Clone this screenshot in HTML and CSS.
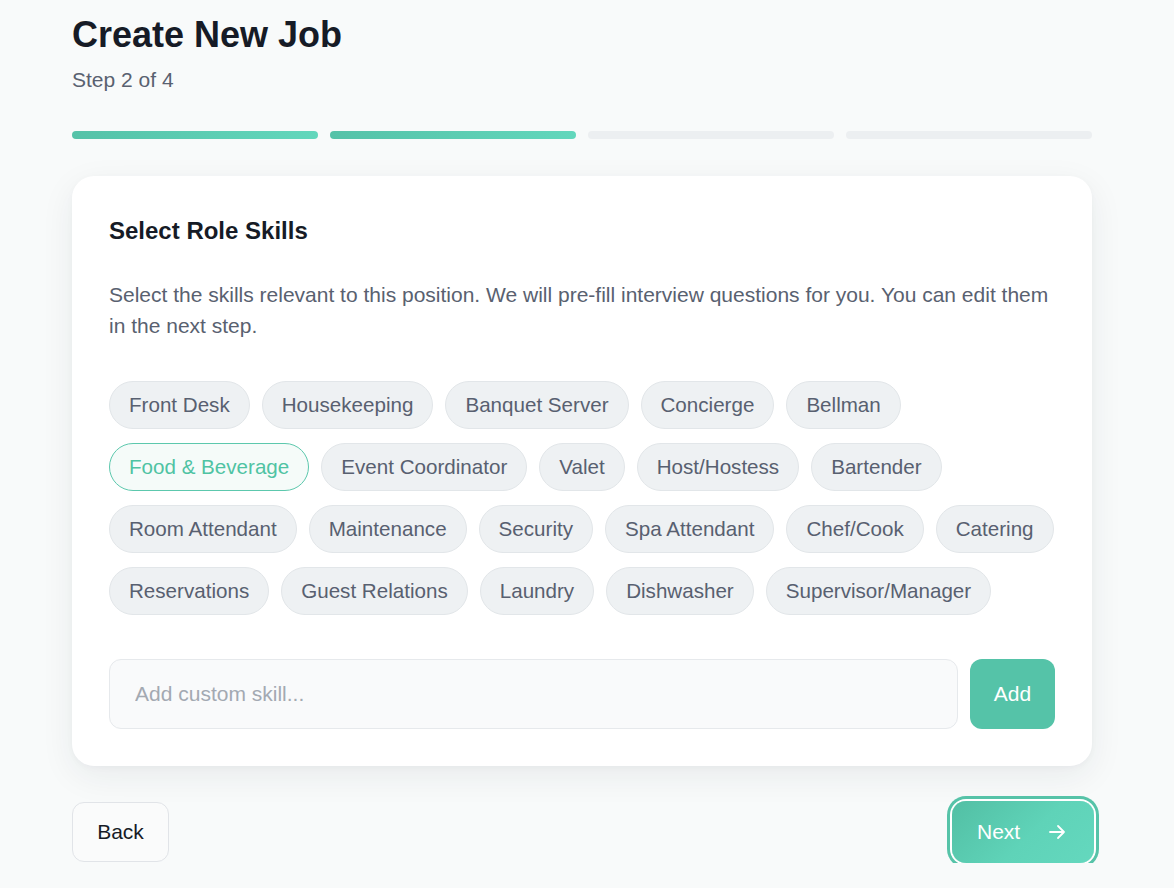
FILE: index.html
```html
<!DOCTYPE html>
<html lang="en">
<head>
<meta charset="utf-8">
<title>Create New Job</title>
<link rel="stylesheet" href="styles.css">
</head>
<body>
<main class="page">
  <header class="header">
    <h1 class="title">Create New Job</h1>
    <p class="step">Step 2 of 4</p>
  </header>
  <div class="progress">
    <span class="seg done"></span>
    <span class="seg done"></span>
    <span class="seg"></span>
    <span class="seg"></span>
  </div>
  <section class="card">
    <h2 class="card-title">Select Role Skills</h2>
    <p class="card-desc">Select the skills relevant to this position. We will pre-fill interview questions for you. You can edit them in the next step.</p>
    <div class="chips">
      <div class="chip-row">
        <button class="chip">Front Desk</button>
        <button class="chip">Housekeeping</button>
        <button class="chip">Banquet Server</button>
        <button class="chip">Concierge</button>
        <button class="chip">Bellman</button>
      </div>
      <div class="chip-row">
        <button class="chip selected">Food &amp; Beverage</button>
        <button class="chip">Event Coordinator</button>
        <button class="chip">Valet</button>
        <button class="chip">Host/Hostess</button>
        <button class="chip">Bartender</button>
      </div>
      <div class="chip-row">
        <button class="chip">Room Attendant</button>
        <button class="chip">Maintenance</button>
        <button class="chip">Security</button>
        <button class="chip">Spa Attendant</button>
        <button class="chip">Chef/Cook</button>
        <button class="chip">Catering</button>
      </div>
      <div class="chip-row">
        <button class="chip">Reservations</button>
        <button class="chip">Guest Relations</button>
        <button class="chip">Laundry</button>
        <button class="chip">Dishwasher</button>
        <button class="chip">Supervisor/Manager</button>
      </div>
    </div>
    <div class="custom">
      <input class="custom-input" type="text" placeholder="Add custom skill...">
      <button class="add-btn">Add</button>
    </div>
  </section>
  <footer class="actions">
    <button class="back-btn">Back</button>
    <button class="next-btn"><span>Next</span>
      <svg class="arrow" width="20" height="20" viewBox="0 0 20 20" fill="none" stroke="currentColor" stroke-width="1.8" stroke-linecap="round" stroke-linejoin="round"><path d="M3 10h14M11 4l6 6-6 6"/></svg>
    </button>
  </footer>
</main>
</body>
</html>
```

FILE: styles.css
```css
* { box-sizing: border-box; }
html, body { margin: 0; padding: 0; }
body {
  background: #f8fafa;
  font-family: "Liberation Sans", Arial, Helvetica, sans-serif;
  color: #111827;
}
.page {
  width: 1020px;
  margin-left: 72px;
  padding-top: 13px;
}
.header { margin: 0; }
.title {
  margin: 0;
  font-size: 36px;
  line-height: 44px;
  font-weight: 700;
  color: #161b26;
}
.step {
  margin: 10px 0 0;
  font-size: 21px;
  line-height: 26px;
  color: #596170;
}
.progress {
  display: flex;
  gap: 12px;
  margin-top: 38px;
}
.seg {
  flex: 1;
  height: 8px;
  border-radius: 4px;
  background: #eceff1;
}
.seg.done {
  background: linear-gradient(90deg, #55c2a8, #62d7bc);
}
.card {
  margin-top: 37px;
  background: #fff;
  border-radius: 22px;
  padding: 41px 37px 37px;
  box-shadow: 0 10px 34px rgba(30, 40, 50, 0.07), 0 2px 6px rgba(30, 40, 50, 0.03);
}
.card-title {
  margin: 0;
  font-size: 24px;
  line-height: 28px;
  font-weight: 700;
  color: #161b26;
}
.card-desc {
  margin: 34px 0 0;
  font-size: 21px;
  line-height: 31px;
  color: #596170;
}
.chips {
  margin-top: 40px;
  display: flex;
  flex-direction: column;
  gap: 14px;
}
.chip-row {
  display: flex;
  gap: 12px;
  flex-wrap: nowrap;
}
.chip {
  height: 48px;
  padding: 0 19px;
  border-radius: 24px;
  border: 1px solid #e2e6e9;
  background: #eef1f3;
  font-family: inherit;
  font-size: 20.6px;
  color: #586070;
  white-space: nowrap;
  cursor: pointer;
}
.chip.selected {
  background: #f5fbf9;
  border-color: #5cc8ad;
  color: #4fc3a3;
}
.custom {
  margin-top: 44px;
  display: flex;
  gap: 12px;
}
.custom-input {
  flex: 1;
  height: 70px;
  border: 1px solid #e6e9ec;
  border-radius: 12px;
  background: #f9fafb;
  padding: 0 25px;
  font-family: inherit;
  font-size: 21px;
  color: #111827;
  outline: none;
}
.custom-input::placeholder { color: #a3a9b2; }
.add-btn {
  width: 85px;
  height: 70px;
  border: none;
  border-radius: 12px;
  background: #55c3a8;
  color: #fff;
  font-family: inherit;
  font-size: 21px;
  cursor: pointer;
}
.actions {
  margin-top: 35px;
  display: flex;
  justify-content: space-between;
  align-items: center;
}
.back-btn {
  width: 97px;
  height: 60px;
  border: 1px solid #e1e4e8;
  border-radius: 12px;
  background: #fafbfb;
  font-family: inherit;
  font-size: 21px;
  color: #161b26;
  cursor: pointer;
}
.next-btn {
  width: 142px;
  height: 62px;
  margin-right: -2px;
  border: none;
  border-radius: 14px;
  background: linear-gradient(135deg, #52bfa4 0%, #5fd3b8 55%, #64d8be 100%);
  box-shadow: 0 0 0 2px #fff, 0 0 0 5px #56c3a8;
  color: #fff;
  font-family: inherit;
  font-size: 21px;
  display: flex;
  align-items: center;
  padding: 0 0 0 25px;
  gap: 27px;
  cursor: pointer;
}
.arrow { display: block; }
```
